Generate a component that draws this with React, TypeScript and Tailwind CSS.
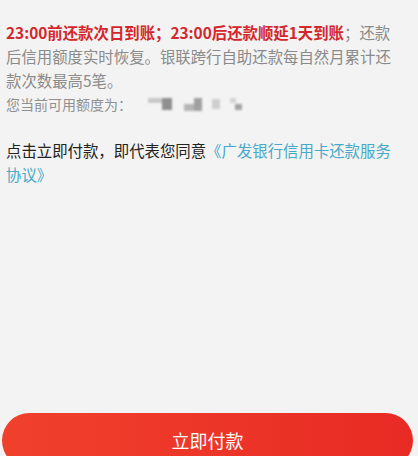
import React from "react"

const font = { fontFamily: '"Noto Sans CJK SC", "Noto Sans", sans-serif' }

// pixelated, masked amount
const BlurredAmount = () => {
  return (
    <span className="inline-flex items-center gap-[4px] ml-[16px] h-[16px] blur-[1.2px]">
      <span className="flex items-start">
        <span className="w-[14px] h-[5px] bg-[#c8c8c8] self-start" />
        <span className="w-[10px] h-[12px] bg-[#8f8f8f]" />
      </span>
      <span className="flex items-end ml-[8px]">
        <span className="w-[10px] h-[7px] bg-[#b5b5b5]" />
        <span className="w-[8px] h-[13px] bg-[#a0a0a0]" />
      </span>
      <span className="w-[8px] h-[10px] bg-[#cfcfcf] ml-[6px]" />
      <span className="flex flex-col ml-[6px]">
        <span className="w-[6px] h-[5px] bg-[#d5d5d5]" />
        <span className="w-[7px] h-[6px] bg-[#a3a3a3] ml-[5px] mt-[1px]" />
      </span>
    </span>
  )
}

export default function App() {
  return (
    <div className="h-[456px] w-[418px] overflow-hidden bg-[#f3f3f3] flex flex-col" style={font}>
      <div className="pl-[6px] pr-[17px] pt-[20px]">
        <p className="text-[15.4px] leading-[24px] text-[#8a8a8a]">
          <span className="text-[#d4272c] font-semibold">23:00前还款次日到账；23:00后还款顺延1天到账</span>
          ；还款后信用额度实时恢复。银联跨行自助还款每自然月累计还款次数最高5笔。
        </p>
        <p className="text-[14px] leading-[24px] text-[#909090] flex items-center">
          您当前可用额度为：
          <BlurredAmount />
        </p>
        <p className="mt-[22px] text-[15.4px] leading-[24px] text-[#222]">
          点击立即付款，即代表您同意
          <span className="text-[#47a9c8]">《广发银行信用卡还款服务协议》</span>
        </p>
      </div>
      <div className="mt-auto -mb-[12px] pl-[2px] pr-[5px]">
        <button className="w-full h-[55px] rounded-full bg-gradient-to-r from-[#f0402c] to-[#e82a24] text-white text-[18px] flex items-start justify-center pt-[14px]">
          立即付款
        </button>
      </div>
    </div>
  )
}
